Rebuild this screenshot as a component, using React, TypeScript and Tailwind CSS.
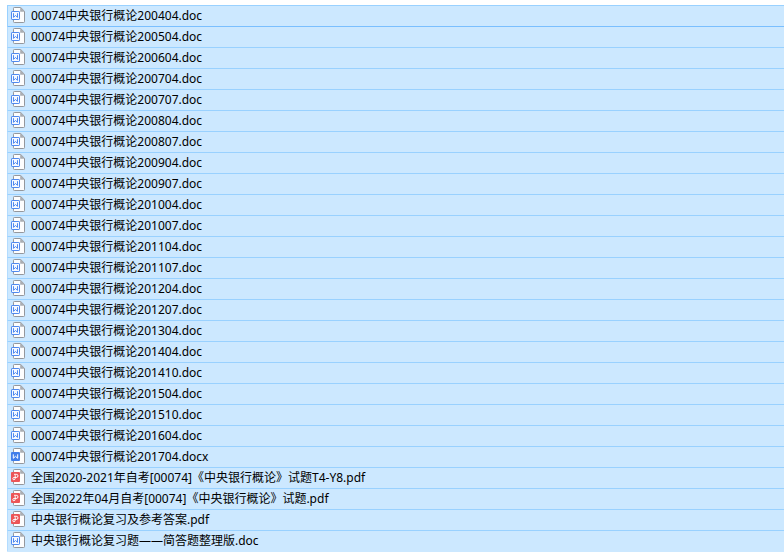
import React from 'react';

type FileKind = 'doc' | 'docx' | 'pdf';

interface IFile {
    name: string;
    kind: FileKind;
}

const files: IFile[] = [
    { name: '00074中央银行概论200404.doc', kind: 'doc' },
    { name: '00074中央银行概论200504.doc', kind: 'doc' },
    { name: '00074中央银行概论200604.doc', kind: 'doc' },
    { name: '00074中央银行概论200704.doc', kind: 'doc' },
    { name: '00074中央银行概论200707.doc', kind: 'doc' },
    { name: '00074中央银行概论200804.doc', kind: 'doc' },
    { name: '00074中央银行概论200807.doc', kind: 'doc' },
    { name: '00074中央银行概论200904.doc', kind: 'doc' },
    { name: '00074中央银行概论200907.doc', kind: 'doc' },
    { name: '00074中央银行概论201004.doc', kind: 'doc' },
    { name: '00074中央银行概论201007.doc', kind: 'doc' },
    { name: '00074中央银行概论201104.doc', kind: 'doc' },
    { name: '00074中央银行概论201107.doc', kind: 'doc' },
    { name: '00074中央银行概论201204.doc', kind: 'doc' },
    { name: '00074中央银行概论201207.doc', kind: 'doc' },
    { name: '00074中央银行概论201304.doc', kind: 'doc' },
    { name: '00074中央银行概论201404.doc', kind: 'doc' },
    { name: '00074中央银行概论201410.doc', kind: 'doc' },
    { name: '00074中央银行概论201504.doc', kind: 'doc' },
    { name: '00074中央银行概论201510.doc', kind: 'doc' },
    { name: '00074中央银行概论201604.doc', kind: 'doc' },
    { name: '00074中央银行概论201704.docx', kind: 'docx' },
    { name: '全国2020-2021年自考[00074]《中央银行概论》试题T4-Y8.pdf', kind: 'pdf' },
    { name: '全国2022年04月自考[00074]《中央银行概论》试题.pdf', kind: 'pdf' },
    { name: '中央银行概论复习及参考答案.pdf', kind: 'pdf' },
    { name: '中央银行概论复习题——简答题整理版.doc', kind: 'doc' },
];

const FileIcon: React.FC<{ kind: FileKind }> = ({ kind }) => (
    <svg width="16" height="16" viewBox="0 0 16 16" fill="none" className="mb-0.5 shrink-0" aria-hidden="true">
        {/* Sheet with a folded corner */}
        <path d="M3.3 .5h6.4l3.8 3.8v10.4q0 .8-.8 .8h-9.4q-.8 0-.8-.8v-13.4q0-.8 .8-.8z" fill="#fdfdfd" stroke="#94979c" />
        <path d="M9.2 .5l4.3 4.3h-4.3z" fill="#a9acb1" />
        {kind === 'doc' && (
            <>
                <rect x=".5" y="4.5" width="8" height="8" rx=".6" fill="#f6f9ff" stroke="#4f89f0" />
                <path d="M2.5 6.2v4.2l2-2 2 2V6.2" stroke="#4f89f0" />
            </>
        )}
        {kind === 'docx' && (
            <>
                <rect x="0" y="4" width="9" height="9" rx="1" fill="#3f7eea" />
                <path d="M2.3 6.3v4l2.2-2 2.2 2v-4" stroke="#fff" />
            </>
        )}
        {kind === 'pdf' && (
            <>
                <rect x="0" y="3" width="9" height="10" rx="1" fill="#ec5557" />
                <path d="M3 5.3h2.2q1.8 0 1.8 1.6T5.2 8.5H3.1q-1.3 0-1.3 1.1t1 1.1q1.4 0 1.4-1.4V6.2" stroke="#fff" />
            </>
        )}
    </svg>
);

const App: React.FC = () => {
    return (
        <main className="bg-white pt-[5px] pl-[7px] font-['Noto_Sans','Noto_Sans_CJK_SC',sans-serif]">
            <ul className="bg-[#cce8ff] pb-px">
                {files.map((file) => (
                    <li
                        key={file.name}
                        className="flex h-[21px] items-center gap-1 border-t border-l border-t-[#99d1ff] border-l-[#b3dcff] pl-[3px] first:border-l-[#99d1ff] nth-2:border-t-[#7abfff]"
                    >
                        <FileIcon kind={file.kind} />
                        <span className="text-xs leading-5 whitespace-nowrap text-black">{file.name}</span>
                    </li>
                ))}
            </ul>
        </main>
    );
};

export default App;
